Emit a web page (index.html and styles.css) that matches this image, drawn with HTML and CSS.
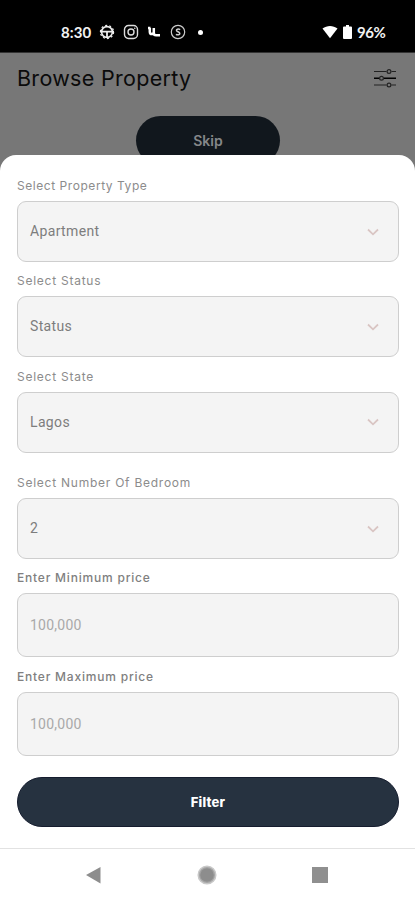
FILE: index.html
```html
<!DOCTYPE html>
<html lang="en">
<head>
<meta charset="utf-8">
<title>Browse Property</title>
<link rel="stylesheet" href="styles.css">
</head>
<body>
<div class="status-bar">
  <div class="status-left">
    <span class="clock">8:30</span>
    <svg class="ico" viewBox="0 0 16 16"><g fill="none" stroke="#eee"><circle cx="8" cy="8" r="5.400" stroke-width="1.600"/><circle cx="8" cy="8" r="6.600" stroke-width="1.200" stroke-dasharray="2 2.150"/><path d="M1 7.700h14M8 8v5" stroke-width="1.800"/></g></svg>
    <svg class="ico" viewBox="0 0 16 16"><g fill="none" stroke="#ddd" stroke-width="1.400"><rect x="1.500" y="1.500" width="13" height="13" rx="4"/><circle cx="8" cy="8" r="3"/></g><circle cx="11.800" cy="4.200" r=".8" fill="#ddd"/></svg>
    <svg class="ico" viewBox="0 0 16 16"><path d="M2 4h2.500M3.800 4v3.700c0 3.200 4 3.200 4 0V4v5.200c0 1.600 1 2 2.300 2H14" fill="none" stroke="#fff" stroke-width="2.500"/></svg>
    <svg class="ico" viewBox="0 0 16 16"><g fill="none" stroke="#ccc"><circle cx="8" cy="8" r="6.700" stroke-width="1.200"/><path d="M10.200 5.600C8 4.500 6.200 5.200 6.500 6.600c.4 1.300 3 1.100 3.300 2.700.2 1.500-2.200 2-3.900 1.100" stroke-width="1.500"/></g></svg>
    <span class="dot"></span>
  </div>
  <div class="status-right">
    <svg class="wifi" viewBox="0 0 16 14"><path d="M.5 3.600C5 0 11 0 15.500 3.600L8 13.300z" fill="#fff"/></svg>
    <svg class="battery" viewBox="0 0 9 14"><path d="M3 0h3v1.500h2q1 0 1 1V13q0 1-1 1H1q-1 0-1-1V2.500q0-1 1-1h2z" fill="#fff"/></svg>
    <span class="percent">96%</span>
  </div>
</div>
<header class="page-head">
  <div class="title-row">
    <h1>Browse Property</h1>
    <svg class="sliders" viewBox="0 0 22 20"><g fill="none" stroke="#222" stroke-width="1.200"><path d="M0 3.500h12.500M17.500 3.500H22M0 17h12.500M17.500 17H22"/><path d="M0 10.200h5M10 10.200h12" stroke="#000" stroke-width="1.600"/><circle cx="15" cy="3.500" r="1.900"/><circle cx="7.500" cy="10.200" r="1.900"/><circle cx="15" cy="17" r="1.900"/></g></svg>
  </div>
  <div class="skip"><span>Skip</span></div>
</header>
<main class="sheet">
  <div class="field"><label class="w-type">Select Property Type</label><div class="box"><span>Apartment</span><svg class="chev" viewBox="0 0 12 8"><path d="M1 1.500 6 6.300l5-4.800"/></svg></div></div>
  <div class="field"><label>Select Status</label><div class="box"><span>Status</span><svg class="chev" viewBox="0 0 12 8"><path d="M1 1.500 6 6.300l5-4.800"/></svg></div></div>
  <div class="field wide-gap"><label>Select State</label><div class="box"><span>Lagos</span><svg class="chev" viewBox="0 0 12 8"><path d="M1 1.500 6 6.300l5-4.800"/></svg></div></div>
  <div class="field"><label>Select Number Of Bedroom</label><div class="box"><span>2</span><svg class="chev" viewBox="0 0 12 8"><path d="M1 1.500 6 6.300l5-4.800"/></svg></div></div>
  <div class="field"><label class="strong">Enter Minimum price</label><div class="box price"><span>100,000</span></div></div>
  <div class="field"><label class="strong">Enter Maximum price</label><div class="box price"><span>100,000</span></div></div>
  <button class="filter" type="button">Filter</button>
</main>
<nav class="nav">
  <svg viewBox="0 0 20 20"><path d="M2 10 16.500 2v16.500z" fill="#8d8d8d"/></svg>
  <svg viewBox="0 0 20 20"><circle cx="10" cy="10" r="8.800" fill="#a5a5a5" stroke="#c8c8c8" stroke-width="1.500"/><circle cx="10" cy="10" r="6.800" fill="#8d8d8d"/></svg>
  <svg viewBox="0 0 20 20"><rect x="2" y="2" width="16" height="16" fill="#8f8f8f"/></svg>
</nav>
</body>
</html>
```
FILE: styles.css
```css
* { box-sizing: border-box; }
body { margin: 0; width: 415px; height: 900px; overflow: hidden; display: flex; flex-direction: column; background: #777; font-family: Inter, "Open Sans", sans-serif; }
svg { display: block; flex: none; }
.status-bar { height: 53px; flex: none; background: #000; color: #f2f2f2; display: flex; justify-content: space-between; padding: 12px 30px 0 61px; border-bottom: 1px solid #333; font-family: Lato, sans-serif; font-weight: 700; font-size: 15px; }
.status-left, .status-right { display: flex; align-items: center; }
.clock { width: 38px; letter-spacing: .1px; }
.ico { width: 16px; height: 16px; margin-right: 7.500px; }
.dot { width: 5px; height: 5px; border-radius: 50%; background: #fff; margin-left: 5px; }
.wifi { width: 16px; height: 14px; margin-right: 5px; }
.battery { width: 9px; height: 14px; margin-right: 5px; }
.percent { width: 28px; letter-spacing: -.5px; white-space: nowrap; }
.page-head { height: 102px; flex: none; padding: 9px 19px 0 17px; }
.title-row { display: flex; justify-content: space-between; align-items: center; height: 32px; }
h1 { margin: 0; font-size: 21.500px; font-weight: 400; letter-spacing: .3px; color: #0b0b0b; }
.sliders { width: 22px; height: 20px; }
.skip { width: 144px; height: 49px; border-radius: 25px; background: #11171d; margin: 22px 0 0 119px; color: #858789; display: flex; align-items: center; justify-content: center; font-size: 14px; font-weight: 600; }
.sheet { height: 693px; flex: none; background: #fff; border-radius: 16px 16px 0 0; padding: 21px 16px 0 17px; }
.field { margin-bottom: 9.300px; }
.field.wide-gap { margin-bottom: 20.500px; }
label { display: block; height: 20px; line-height: 20px; margin-bottom: 5px; font-size: 12px; color: #8c8c8c; white-space: nowrap; letter-spacing: .75px; }
label.w-type { letter-spacing: .55px; }
label.strong { color: #808080; font-weight: 500; letter-spacing: .8px; }
.box { height: 61px; border: 1px solid #cecece; border-radius: 9px; background: #f4f4f4; display: flex; align-items: center; justify-content: space-between; padding: 0 19px 0 12px; font-family: Roboto, sans-serif; font-size: 14px; letter-spacing: .35px; color: #7d7d7d; }
.box span { margin-top: -1px; }
.box.price span { margin-top: 0; }
.box.price { height: 64px; color: #a9a9a9; letter-spacing: .25px; }
.chev { width: 12px; height: 8px; fill: none; stroke: #d9c5c3; stroke-width: 1.800; }
.filter { display: block; width: 100%; height: 50px; margin-top: 21.500px; border: 1px solid #151c2e; border-radius: 25px; background: #263240; color: #fff; font: 800 13px Inter, sans-serif; padding: 0; letter-spacing: .2px; }
.nav { flex: 1; border-top: 1px solid #e2e2e2; background: #fff; display: flex; justify-content: space-between; align-items: center; padding: 1px 85px 0 84px; }
.nav svg { width: 20px; height: 20px; }
```
